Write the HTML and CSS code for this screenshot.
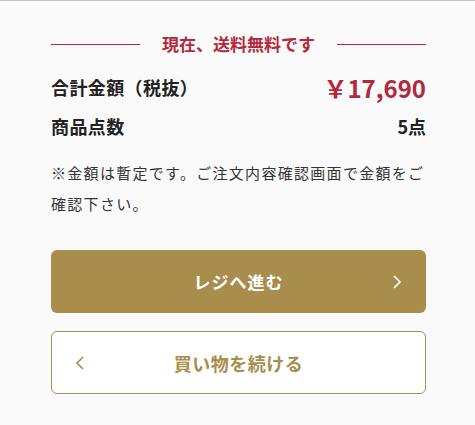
FILE: index.html
```html
<!DOCTYPE html>
<html lang="ja">
<head>
<meta charset="utf-8">
<link rel="stylesheet" href="styles.css">
</head>
<body>
<div class="panel">
  <div class="summary">
    <div class="notice">
      <span class="rule"></span>
      <span class="notice-text">現在、送料無料です</span>
      <span class="rule"></span>
    </div>
    <div class="row total">
      <span class="label">合計金額（税抜）</span>
      <span class="price">￥17,690</span>
    </div>
    <div class="row count">
      <span class="label">商品点数</span>
      <span class="value">5点</span>
    </div>
    <p class="note">※金額は暫定です。ご注文内容確認画面で金額をご確認下さい。</p>
    <a class="btn btn-primary" href="#">
      <span class="btn-text">レジへ進む</span>
      <svg class="chev chev-right" width="10" height="16" viewBox="0 0 10 16"><path d="M2 2 L8 8 L2 14" fill="none" stroke="currentColor" stroke-width="1.7"/></svg>
    </a>
    <a class="btn btn-secondary" href="#">
      <svg class="chev chev-left" width="10" height="16" viewBox="0 0 10 16"><path d="M8 2 L2 8 L8 14" fill="none" stroke="currentColor" stroke-width="1.7"/></svg>
      <span class="btn-text">買い物を続ける</span>
    </a>
  </div>
</div>
</body>
</html>
```

FILE: styles.css
```css
* { box-sizing: border-box; }
html, body {
  margin: 0;
  padding: 0;
  background: #fafafa;
}
body {
  font-family: "Noto Sans CJK JP", "Noto Sans", sans-serif;
  color: #222;
}
.panel {
  width: 475px;
  height: 425px;
  border-top: 1px solid #c6c6c6;
  padding: 28px 49px 0 51px;
}
.summary {
  width: 375px;
}
.notice {
  display: flex;
  align-items: center;
  gap: 22px;
  height: 30px;
}
.rule {
  flex: 1;
  height: 1px;
  background: #b3283b;
}
.notice-text {
  color: #b3283b;
  font-weight: 700;
  font-size: 17px;
  line-height: 30px;
}
.row {
  display: flex;
  justify-content: space-between;
  align-items: center;
  font-weight: 700;
}
.row.total {
  margin-top: 12px;
  height: 32px;
}
.row.count {
  margin-top: 7px;
  height: 32px;
}
.label {
  font-size: 18px;
  letter-spacing: 0.4px;
}
.price {
  color: #b3283b;
  font-size: 24px;
}
.value {
  font-size: 18px;
}
.note {
  margin: 15px 0 0;
  font-size: 15px;
  letter-spacing: 1.3px;
  line-height: 31px;
  color: #333;
}
.btn {
  display: flex;
  align-items: center;
  position: relative;
  height: 63px;
  border-radius: 6px;
  text-decoration: none;
  font-weight: 700;
  font-size: 17px;
  letter-spacing: 1px;
}
.btn-text {
  flex: 1;
  text-align: center;
}
.btn-primary {
  margin-top: 31px;
  background: #a88d4c;
  color: #fff;
}
.btn-secondary {
  margin-top: 18px;
  background: #fff;
  border: 1px solid #a88d4c;
  color: #a88d4c;
  font-size: 18px;
  letter-spacing: 0.5px;
}
.chev {
  position: absolute;
  top: 50%;
  margin-top: -8px;
}
.chev-right { right: 24px; }
.chev-left { left: 23px; }
```
